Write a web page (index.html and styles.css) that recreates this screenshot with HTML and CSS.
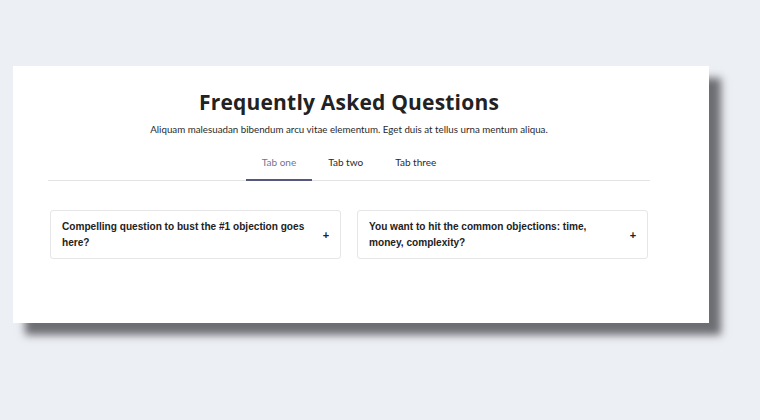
FILE: index.html
```html
<!DOCTYPE html>
<html>
<head>
<meta charset="utf-8">
<link rel="stylesheet" href="styles.css">
</head>
<body>
<section class="panel">
  <div class="inner">
    <h1 class="title">Frequently Asked Questions</h1>
    <p class="subtitle">Aliquam malesuadan bibendum arcu vitae elementum. Eget duis at tellus urna mentum aliqua.</p>
    <nav class="tabs">
      <span class="tab active">Tab one</span>
      <span class="tab">Tab two</span>
      <span class="tab">Tab three</span>
    </nav>
    <div class="faq">
      <div class="item">
        <span class="q">Compelling question to bust the #1 objection goes here?</span>
        <span class="plus">+</span>
      </div>
      <div class="item">
        <span class="q">You want to hit the common objections: time, money, complexity?</span>
        <span class="plus">+</span>
      </div>
    </div>
  </div>
</section>
</body>
</html>
```

FILE: styles.css
```css
html, body {
  margin: 0;
  padding: 0;
  background: #eceff4;
}
body {
  min-height: 420px;
  box-sizing: border-box;
  padding: 66px 0 0 13px;
}
.panel {
  width: 696px;
  height: 257px;
  background: #ffffff;
  box-shadow: 12px 12px 8px rgba(30, 30, 35, 0.62);
  box-sizing: border-box;
  padding: 0 0 0 35px;
}
.inner {
  width: 602px;
  display: flex;
  flex-direction: column;
  align-items: center;
}
.title {
  margin: 0;
  padding-top: 23px;
  font-family: "Open Sans", sans-serif;
  font-weight: 700;
  font-size: 21px;
  line-height: 26px;
  color: #222222;
  letter-spacing: 0.2px;
}
.subtitle {
  margin: 7px 0 0;
  font-family: Lato, sans-serif;
  font-size: 9.75px;
  line-height: 14px;
  color: #2a2a2a;
}
.tabs {
  margin-top: 16px;
  width: 100%;
  display: flex;
  justify-content: center;
  border-bottom: 1px solid #e4e4e6;
}
.tab {
  font-family: Lato, sans-serif;
  font-size: 10px;
  line-height: 14px;
  color: #2a2a2a;
  padding: 3px 16px 10px;
}
.tab.active {
  color: #73748f;
  border-bottom: 2px solid #55587a;
  margin-bottom: -1px;
}
.faq {
  margin-top: 29px;
  width: 598px;
  display: flex;
  gap: 16px;
}
.item {
  flex: 1;
  box-sizing: border-box;
  height: 49px;
  border: 1px solid #e6e6e8;
  border-radius: 3px;
  display: flex;
  align-items: center;
  padding: 0 10px 0 11px;
  font-family: "Liberation Sans", Arial, sans-serif;
  font-weight: 700;
  font-size: 10.1px;
  line-height: 16px;
  color: #222222;
}
.q {
  flex: 1;
  padding-right: 8px;
}
.plus {
  font-size: 11px;
  width: 8px;
  text-align: center;
}
```
